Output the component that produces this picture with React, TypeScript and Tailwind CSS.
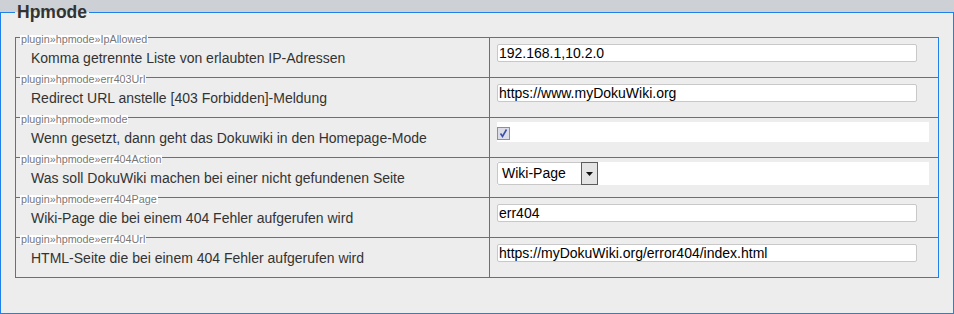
import React from 'react';

type Row = {
  key: string;
  label: string;
  kind: 'text' | 'check' | 'select';
  value?: string;
};

const rows: Row[] = [
  { key: 'plugin»hpmode»IpAllowed', label: 'Komma getrennte Liste von erlaubten IP-Adressen', kind: 'text', value: '192.168.1,10.2.0' },
  { key: 'plugin»hpmode»err403Url', label: 'Redirect URL anstelle [403 Forbidden]-Meldung', kind: 'text', value: 'https://www.myDokuWiki.org' },
  { key: 'plugin»hpmode»mode', label: 'Wenn gesetzt, dann geht das Dokuwiki in den Homepage-Mode', kind: 'check' },
  { key: 'plugin»hpmode»err404Action', label: 'Was soll DokuWiki machen bei einer nicht gefundenen Seite', kind: 'select', value: 'Wiki-Page' },
  { key: 'plugin»hpmode»err404Page', label: 'Wiki-Page die bei einem 404 Fehler aufgerufen wird', kind: 'text', value: 'err404' },
  { key: 'plugin»hpmode»err404Url', label: 'HTML-Seite die bei einem 404 Fehler aufgerufen wird', kind: 'text', value: 'https://myDokuWiki.org/error404/index.html' },
];

const Checkbox = () => (
  <span className="block w-[13px] h-[13px] border border-[#8e8f8f] bg-[#dcdde6]">
    <svg width="11" height="11" viewBox="0 0 11 11">
      <path d="M2.5 5.5 L4.5 8.5 L8.5 1.5" fill="none" stroke="#3c4fa8" strokeWidth="1.6" />
    </svg>
  </span>
);

const Select = ({ value }: { value: string }) => (
  <div className="flex w-[101px] h-[23px] border border-[#c8c8c8] rounded-[2px] bg-white">
    <span className="flex-1 pl-[4px] text-[14px] leading-[21px] text-black">{value}</span>
    <span className="flex items-center justify-center w-[17px] h-[23px] -mt-[1px] -mr-[1px] border border-[#5c5c5c] bg-[#e4e4e4]">
      <svg width="7" height="4" viewBox="0 0 7 4">
        <path d="M0 0 H7 L3.5 4 Z" fill="#111" />
      </svg>
    </span>
  </div>
);

export default function App() {
  return (
    <div className="w-[954px] h-[314px] bg-[#c9ccd1] bg-[linear-gradient(180deg,#cdd0d5,#c4c7cc)] font-['Liberation_Sans',Arial,sans-serif]">
      <fieldset className="h-[314px] border border-[#1f80e8] bg-[#ededed] pl-[14px] pt-[13px]">
        <legend className="px-[2px] text-[17.5px] leading-[24px] font-bold text-[#333]">Hpmode</legend>
        <table className="w-[924px] border-collapse">
          <tbody>
            {rows.map((r) => (
              <tr key={r.key} className="h-[40px]">
                <td className="relative w-[474px] border border-[#1f80e8] align-top pl-[15px] pt-[12px] text-[14px] leading-[16px] text-[#333]">
                  <span className="absolute left-[4px] -top-[3px] bg-white px-[1px] text-[10.75px] leading-[9px] text-[#777]">{r.key}</span>
                  {r.label}
                </td>
                <td className="border border-[#1f80e8] align-top pl-[7px]">
                  {r.kind === 'text' && (
                    <div className="pt-[6px]">
                      <div className="w-[420px] h-[18px] border border-[#c8c8c8] rounded-[2px] bg-white px-[1px] text-[14px] leading-[16px] text-black">
                        {r.value}
                      </div>
                    </div>
                  )}
                  {r.kind === 'check' && (
                    <div className="mt-[4px] w-[432px] h-[20px] bg-white pt-[5px]">
                      <Checkbox />
                    </div>
                  )}
                  {r.kind === 'select' && (
                    <div className="mt-[4px] w-[432px] h-[23px] bg-white">
                      <Select value={r.value || ''} />
                    </div>
                  )}
                </td>
              </tr>
            ))}
          </tbody>
        </table>
      </fieldset>
    </div>
  );
}
